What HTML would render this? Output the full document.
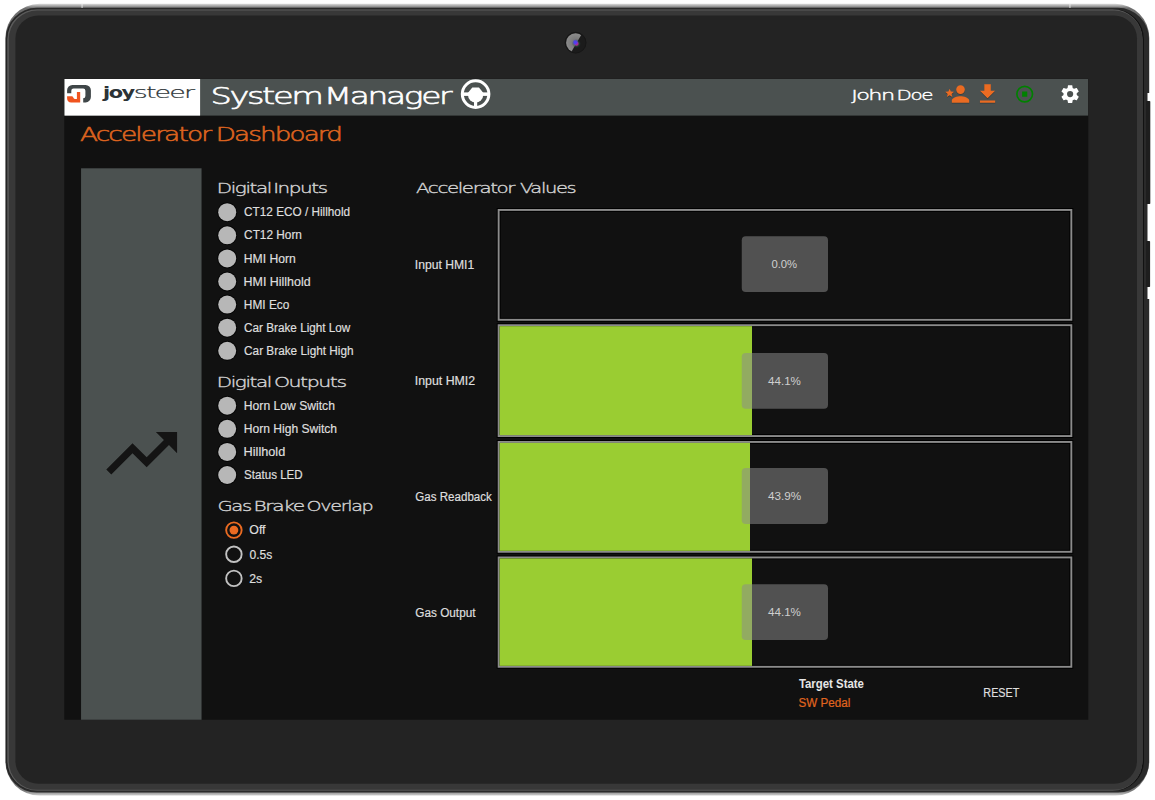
<!DOCTYPE html>
<html lang="en"><head><meta charset="utf-8"><title>Accelerator Dashboard</title>
<style>html,body{margin:0;padding:0;background:#fff;width:1155px;height:800px;overflow:hidden}svg{display:block;position:absolute;left:0;top:0}text{white-space:pre}</style>
</head><body>
<svg width="1155" height="800" viewBox="0 0 1155 800">
<defs>
<linearGradient id="hl" x1="0" y1="0" x2="0" y2="1"><stop offset="0" stop-color="#dcdcdc"/><stop offset="0.0055" stop-color="#6e6e6e"/><stop offset="0.5" stop-color="#666"/><stop offset="0.994" stop-color="#777"/><stop offset="1" stop-color="#d0d0d0"/></linearGradient>
<radialGradient id="lens" cx="0.5" cy="0.5" r="0.5"><stop offset="0" stop-color="#4a3cff"/><stop offset="0.4" stop-color="#4a3cff" stop-opacity="0.85"/><stop offset="1" stop-color="#4a3cff" stop-opacity="0"/></radialGradient>
<radialGradient id="lens2" cx="0.5" cy="0.5" r="0.5"><stop offset="0" stop-color="#d02a70"/><stop offset="0.35" stop-color="#c02a8a" stop-opacity="0.9"/><stop offset="0.6" stop-color="#2a6a4a" stop-opacity="0.45"/><stop offset="1" stop-color="#223" stop-opacity="0"/></radialGradient>
<radialGradient id="camg" cx="0.5" cy="0.5" r="0.5"><stop offset="0" stop-color="#6e6e6e"/><stop offset="0.45" stop-color="#7c7c7c"/><stop offset="1" stop-color="#8c8c8c"/></radialGradient>
<clipPath id="scr"><rect x="64.3" y="78.9" width="1024" height="640.8"/></clipPath>
<clipPath id="camL"><polygon points="560,28 585.3,28 565.4,62 560,62"/></clipPath>
</defs>
<g id="device">
<rect x="5.4" y="3.8" width="1143.9" height="791.8" rx="34" ry="34" fill="url(#hl)"/>
<rect x="5.7" y="7.8" width="1143.3" height="784.8" rx="31" ry="31" fill="#2a2a2a"/>
<rect x="1146" y="101" width="4.3" height="103" rx="0.8" fill="#1e1e1e"/>
<rect x="1146" y="241" width="4.1" height="46" rx="0.8" fill="#1e1e1e"/>
<rect x="1147.5" y="93" width="4" height="8" fill="#fff"/><rect x="1147.5" y="204" width="4" height="37" fill="#fff"/><rect x="1147.5" y="287" width="4" height="12" fill="#fff"/>
<rect x="6.8" y="9.2" width="1137.2" height="781.6" rx="30" ry="30" fill="#121212"/>
<rect x="7.2" y="9.2" width="1135.3" height="781.6" rx="30" ry="30" fill="#5a5a5a"/>
<rect x="8.8" y="10.6" width="1133.7" height="779.2" rx="28.5" ry="28.5" fill="#383838"/>
<rect x="15.4" y="15.6" width="1121.6" height="768.2" rx="23" ry="23" fill="#232323"/>
<rect x="81.6" y="3.8" width="0.9" height="4.2" fill="#eee"/><rect x="1069.5" y="3.8" width="0.9" height="4.2" fill="#eee"/>
</g>
<g id="camera">
<circle cx="575.6" cy="42.7" r="10.4" fill="#1b1b1b" stroke="#161616" stroke-width="1"/>
<circle cx="575.6" cy="42.7" r="9.5" fill="url(#camg)" clip-path="url(#camL)"/>
<circle cx="576.5" cy="43.7" r="4.6" fill="url(#lens2)"/>
<circle cx="575.4" cy="42.4" r="3.2" fill="url(#lens)"/>
</g>
<rect x="64.3" y="78.9" width="1024" height="640.8" fill="#111111"/>
<g clip-path="url(#scr)">
<rect x="64.3" y="78.9" width="1024" height="36.7" fill="#4b5150"/>
<rect x="64.3" y="78.9" width="135.8" height="36.7" fill="#fff"/>
<path d="M67.1 93.3V90.2a5.3 5.3 0 0 1 5.3-5.3H85.6a5.3 5.3 0 0 1 5.3 5.3V97.1a5.3 5.3 0 0 1-5.3 5.3H83.2V98.3a2.2 2.2 0 0 0 2.2-2.2V90.8a2.2 2.2 0 0 0-2.2-2.2H73.5a2.2 2.2 0 0 0-2.2 2.2V93.3Z" fill="#3f4648"/>
<path d="M76.9 92.1H80.2V102.4H71.2a4.2 4.2 0 0 1-4.1-4.2V96.3H72.2c0.9 0 1.2 2.6 2.6 2.6H76.9z" fill="#f0541f"/>
<text x="103.05" y="97.7" textLength="30.75" lengthAdjust="spacingAndGlyphs" font-family="'DejaVu Sans','Liberation Sans',sans-serif" font-size="15.8" fill="#2c3336" font-weight="bold" letter-spacing="-1.11">joy</text>
<text x="133.85" y="97.7" textLength="59.25" lengthAdjust="spacingAndGlyphs" font-family="'DejaVu Sans Light','DejaVu Sans','Liberation Sans',sans-serif" font-size="15.8" fill="#2c3336" font-weight="200" stroke="#2c3336" stroke-width="0.2" letter-spacing="-1.11">steer</text>
<text x="210.5" y="103.6" textLength="111.04" lengthAdjust="spacingAndGlyphs" font-family="'DejaVu Sans Light','DejaVu Sans','Liberation Sans',sans-serif" font-size="23.8" fill="#ffffff" font-weight="200" stroke="#ffffff" stroke-width="0.6" letter-spacing="-1.67">System</text>
<text x="323.85" y="103.6" textLength="126.39" lengthAdjust="spacingAndGlyphs" font-family="'DejaVu Sans Light','DejaVu Sans','Liberation Sans',sans-serif" font-size="23.8" fill="#ffffff" font-weight="200" stroke="#ffffff" stroke-width="0.6" letter-spacing="-1.67">Manager</text>
<g fill="#fff">
<circle cx="475.6" cy="94.1" r="13.3" fill="none" stroke="#fff" stroke-width="3"/>
<rect x="462" y="92.4" width="27.2" height="3.5"/>
<rect x="474.0" y="98" width="3.2" height="10"/>
<path d="M468.0 92.8L472.3 87.4H479.0L483.2 92.8V95.0A7.6 7.6 0 0 1 468.0 95.0z"/>
</g>
<text x="851.15" y="99.8" textLength="42.4" lengthAdjust="spacingAndGlyphs" font-family="'DejaVu Sans Light','DejaVu Sans','Liberation Sans',sans-serif" font-size="14.1" fill="#ffffff" font-weight="200" stroke="#ffffff" stroke-width="0.4" letter-spacing="-0.99">John</text>
<text x="896.6" y="99.8" textLength="35.39" lengthAdjust="spacingAndGlyphs" font-family="'DejaVu Sans Light','DejaVu Sans','Liberation Sans',sans-serif" font-size="14.1" fill="#ffffff" font-weight="200" stroke="#ffffff" stroke-width="0.4" letter-spacing="-0.99">Doe</text>
<g fill="#1f2b2b" fill-opacity="0.55">
<g transform="translate(944.2 81.80000000000001) scale(1.0875)"><path d="M15,14C12.33,14 7,15.33 7,18V20H23V18C23,15.33 17.67,14 15,14M15,12A4,4 0 0,0 19,8A4,4 0 0,0 15,4A4,4 0 0,0 11,8A4,4 0 0,0 15,12M5,13.28L7.45,14.77L6.8,11.96L9,10.08L6.11,9.83L5,7.19L3.87,9.83L1,10.08L3.18,11.96L2.5,14.77L5,13.28Z"/></g>
<g transform="translate(974.5 81.80000000000001) scale(1.0875)"><path d="M5,20H19V18H5M19,9H15V3H9V9H5L12,16L19,9Z"/></g>
</g>
<g fill="#ea6b22" fill-opacity="1">
<g transform="translate(944.2 80.9) scale(1.0875)"><path d="M15,14C12.33,14 7,15.33 7,18V20H23V18C23,15.33 17.67,14 15,14M15,12A4,4 0 0,0 19,8A4,4 0 0,0 15,4A4,4 0 0,0 11,8A4,4 0 0,0 15,12M5,13.28L7.45,14.77L6.8,11.96L9,10.08L6.11,9.83L5,7.19L3.87,9.83L1,10.08L3.18,11.96L2.5,14.77L5,13.28Z"/></g>
<g transform="translate(974.5 80.9) scale(1.0875)"><path d="M5,20H19V18H5M19,9H15V3H9V9H5L12,16L19,9Z"/></g>
</g>
<g transform="translate(1014.32 83.72) scale(0.865)" fill="#008000"><path d="M12,2A10,10 0 0,0 2,12A10,10 0 0,0 12,22A10,10 0 0,0 22,12A10,10 0 0,0 12,2M12,4C16.41,4 20,7.59 20,12C20,16.41 16.41,20 12,20C7.59,20 4,16.41 4,12C4,7.59 7.59,4 12,4M9,9V15H15V9"/></g>
<g transform="translate(1059.5 83.5) scale(0.885)" fill="#fff"><path d="M12,15.5A3.5,3.5 0 0,1 8.5,12A3.5,3.5 0 0,1 12,8.5A3.5,3.5 0 0,1 15.5,12A3.5,3.5 0 0,1 12,15.5M19.43,12.97C19.47,12.65 19.5,12.33 19.5,12C19.5,11.67 19.47,11.34 19.43,11L21.54,9.37C21.73,9.22 21.78,8.95 21.66,8.73L19.66,5.27C19.54,5.05 19.27,4.96 19.05,5.05L16.56,6.05C16.04,5.66 15.5,5.32 14.87,5.07L14.5,2.42C14.46,2.18 14.25,2 14,2H10C9.75,2 9.54,2.18 9.5,2.42L9.13,5.07C8.5,5.32 7.96,5.66 7.44,6.05L4.95,5.05C4.73,4.96 4.46,5.05 4.34,5.27L2.34,8.73C2.21,8.95 2.27,9.22 2.46,9.37L4.57,11C4.53,11.34 4.5,11.67 4.5,12C4.5,12.33 4.53,12.65 4.57,12.97L2.46,14.63C2.27,14.78 2.21,15.05 2.34,15.27L4.34,18.73C4.46,18.95 4.73,19.03 4.95,18.95L7.44,17.94C7.96,18.34 8.5,18.68 9.13,18.93L9.5,21.58C9.54,21.82 9.75,22 10,22H14C14.25,22 14.46,21.82 14.5,21.58L14.87,18.93C15.5,18.67 16.04,18.34 16.56,17.94L19.05,18.95C19.27,19.03 19.54,18.95 19.66,18.73L21.66,15.27C21.78,15.05 21.73,14.78 21.54,14.63L19.43,12.97Z"/></g>
<text x="79.95" y="140.5" textLength="130.23" lengthAdjust="spacingAndGlyphs" font-family="'DejaVu Sans Light','DejaVu Sans','Liberation Sans',sans-serif" font-size="19.4" fill="#dc631f" font-weight="200" stroke="#dc631f" stroke-width="0.55" letter-spacing="-1.36">Accelerator</text>
<text x="215.65" y="140.5" textLength="125.45" lengthAdjust="spacingAndGlyphs" font-family="'DejaVu Sans Light','DejaVu Sans','Liberation Sans',sans-serif" font-size="19.4" fill="#dc631f" font-weight="200" stroke="#dc631f" stroke-width="0.55" letter-spacing="-1.36">Dashboard</text>
<rect x="81.05" y="168.3" width="120.5" height="560" fill="#4b5150"/>
<g transform="translate(99.2 410.7) scale(3.54)" fill="#141414"><path d="M16,6L18.29,8.29L13.41,13.17L9.41,9.17L2,16.59L3.41,18L9.41,12L13.41,16L19.71,9.71L22,12V6H16Z"/></g>
<text x="216.75" y="193.0" textLength="54.21" lengthAdjust="spacingAndGlyphs" font-family="'DejaVu Sans Light','DejaVu Sans','Liberation Sans',sans-serif" font-size="14.2" fill="#d2d2d2" font-weight="200" stroke="#d2d2d2" stroke-width="0.35" letter-spacing="-0.99">Digital</text>
<text x="273.15" y="193.0" textLength="53.57" lengthAdjust="spacingAndGlyphs" font-family="'DejaVu Sans Light','DejaVu Sans','Liberation Sans',sans-serif" font-size="14.2" fill="#d2d2d2" font-weight="200" stroke="#d2d2d2" stroke-width="0.35" letter-spacing="-0.99">Inputs</text>
<text x="216.75" y="386.5" textLength="54.21" lengthAdjust="spacingAndGlyphs" font-family="'DejaVu Sans Light','DejaVu Sans','Liberation Sans',sans-serif" font-size="14.2" fill="#d2d2d2" font-weight="200" stroke="#d2d2d2" stroke-width="0.35" letter-spacing="-0.99">Digital</text>
<text x="273.9" y="386.5" textLength="71.76" lengthAdjust="spacingAndGlyphs" font-family="'DejaVu Sans Light','DejaVu Sans','Liberation Sans',sans-serif" font-size="14.2" fill="#d2d2d2" font-weight="200" stroke="#d2d2d2" stroke-width="0.35" letter-spacing="-0.99">Outputs</text>
<text x="217.5" y="510.5" textLength="33.34" lengthAdjust="spacingAndGlyphs" font-family="'DejaVu Sans Light','DejaVu Sans','Liberation Sans',sans-serif" font-size="14.2" fill="#d2d2d2" font-weight="200" stroke="#d2d2d2" stroke-width="0.35" letter-spacing="-0.99">Gas</text>
<text x="253.55" y="510.5" textLength="50.22" lengthAdjust="spacingAndGlyphs" font-family="'DejaVu Sans Light','DejaVu Sans','Liberation Sans',sans-serif" font-size="14.2" fill="#d2d2d2" font-weight="200" stroke="#d2d2d2" stroke-width="0.35" letter-spacing="-0.99">Brake</text>
<text x="306.55" y="510.5" textLength="65.77" lengthAdjust="spacingAndGlyphs" font-family="'DejaVu Sans Light','DejaVu Sans','Liberation Sans',sans-serif" font-size="14.2" fill="#d2d2d2" font-weight="200" stroke="#d2d2d2" stroke-width="0.35" letter-spacing="-0.99">Overlap</text>
<text x="416.05" y="192.7" textLength="98.02" lengthAdjust="spacingAndGlyphs" font-family="'DejaVu Sans Light','DejaVu Sans','Liberation Sans',sans-serif" font-size="14.2" fill="#d2d2d2" font-weight="200" stroke="#d2d2d2" stroke-width="0.35" letter-spacing="-0.99">Accelerator</text>
<text x="519.95" y="192.7" textLength="55.35" lengthAdjust="spacingAndGlyphs" font-family="'DejaVu Sans Light','DejaVu Sans','Liberation Sans',sans-serif" font-size="14.2" fill="#d2d2d2" font-weight="200" stroke="#d2d2d2" stroke-width="0.35" letter-spacing="-0.99">Values</text>
<circle cx="227.2" cy="212.20" r="10" fill="#000" fill-opacity="0.7"/><circle cx="227.2" cy="212.20" r="9" fill="#b7b7b7"/>
<text x="244.1" y="216.3" textLength="105.96" lengthAdjust="spacingAndGlyphs" font-family="'Liberation Sans','DejaVu Sans',sans-serif" font-size="12.0" fill="#dedede" stroke="#dedede" stroke-width="0.2">CT12 ECO / Hillhold</text>
<circle cx="227.2" cy="235.30" r="10" fill="#000" fill-opacity="0.7"/><circle cx="227.2" cy="235.30" r="9" fill="#b7b7b7"/>
<text x="244.1" y="239.4" textLength="57.83" lengthAdjust="spacingAndGlyphs" font-family="'Liberation Sans','DejaVu Sans',sans-serif" font-size="12.0" fill="#dedede" stroke="#dedede" stroke-width="0.2">CT12 Horn</text>
<circle cx="227.2" cy="258.40" r="10" fill="#000" fill-opacity="0.7"/><circle cx="227.2" cy="258.40" r="9" fill="#b7b7b7"/>
<text x="243.85" y="262.5" textLength="51.94" lengthAdjust="spacingAndGlyphs" font-family="'Liberation Sans','DejaVu Sans',sans-serif" font-size="12.0" fill="#dedede" stroke="#dedede" stroke-width="0.2">HMI Horn</text>
<circle cx="227.2" cy="281.50" r="10" fill="#000" fill-opacity="0.7"/><circle cx="227.2" cy="281.50" r="9" fill="#b7b7b7"/>
<text x="243.6" y="285.6" textLength="66.99" lengthAdjust="spacingAndGlyphs" font-family="'Liberation Sans','DejaVu Sans',sans-serif" font-size="12.0" fill="#dedede" stroke="#dedede" stroke-width="0.2">HMI Hillhold</text>
<circle cx="227.2" cy="304.60" r="10" fill="#000" fill-opacity="0.7"/><circle cx="227.2" cy="304.60" r="9" fill="#b7b7b7"/>
<text x="243.85" y="308.7" textLength="45.52" lengthAdjust="spacingAndGlyphs" font-family="'Liberation Sans','DejaVu Sans',sans-serif" font-size="12.0" fill="#dedede" stroke="#dedede" stroke-width="0.2">HMI Eco</text>
<circle cx="227.2" cy="327.70" r="10" fill="#000" fill-opacity="0.7"/><circle cx="227.2" cy="327.70" r="9" fill="#b7b7b7"/>
<text x="244.1" y="331.8" textLength="106.25" lengthAdjust="spacingAndGlyphs" font-family="'Liberation Sans','DejaVu Sans',sans-serif" font-size="12.0" fill="#dedede" stroke="#dedede" stroke-width="0.2">Car Brake Light Low</text>
<circle cx="227.2" cy="350.80" r="10" fill="#000" fill-opacity="0.7"/><circle cx="227.2" cy="350.80" r="9" fill="#b7b7b7"/>
<text x="244.1" y="354.9" textLength="109.46" lengthAdjust="spacingAndGlyphs" font-family="'Liberation Sans','DejaVu Sans',sans-serif" font-size="12.0" fill="#dedede" stroke="#dedede" stroke-width="0.2">Car Brake Light High</text>
<circle cx="227.2" cy="405.70" r="10" fill="#000" fill-opacity="0.7"/><circle cx="227.2" cy="405.70" r="9" fill="#b7b7b7"/>
<text x="243.85" y="409.8" textLength="91.07" lengthAdjust="spacingAndGlyphs" font-family="'Liberation Sans','DejaVu Sans',sans-serif" font-size="12.0" fill="#dedede" stroke="#dedede" stroke-width="0.2">Horn Low Switch</text>
<circle cx="227.2" cy="428.80" r="10" fill="#000" fill-opacity="0.7"/><circle cx="227.2" cy="428.80" r="9" fill="#b7b7b7"/>
<text x="243.85" y="432.9" textLength="93.22" lengthAdjust="spacingAndGlyphs" font-family="'Liberation Sans','DejaVu Sans',sans-serif" font-size="12.0" fill="#dedede" stroke="#dedede" stroke-width="0.2">Horn High Switch</text>
<circle cx="227.2" cy="451.90" r="10" fill="#000" fill-opacity="0.7"/><circle cx="227.2" cy="451.90" r="9" fill="#b7b7b7"/>
<text x="243.6" y="456.0" textLength="41.67" lengthAdjust="spacingAndGlyphs" font-family="'Liberation Sans','DejaVu Sans',sans-serif" font-size="12.0" fill="#dedede" stroke="#dedede" stroke-width="0.2">Hillhold</text>
<circle cx="227.2" cy="475.00" r="10" fill="#000" fill-opacity="0.7"/><circle cx="227.2" cy="475.00" r="9" fill="#b7b7b7"/>
<text x="244.1" y="479.1" textLength="58.57" lengthAdjust="spacingAndGlyphs" font-family="'Liberation Sans','DejaVu Sans',sans-serif" font-size="12.0" fill="#dedede" stroke="#dedede" stroke-width="0.2">Status LED</text>
<circle cx="233.9" cy="530.10" r="7.75" fill="none" stroke="#ea6b22" stroke-width="1.9"/>
<circle cx="233.9" cy="530.10" r="4.4" fill="#ea6b22"/>
<text x="249.3" y="534.4" textLength="16.25" lengthAdjust="spacingAndGlyphs" font-family="'Liberation Sans','DejaVu Sans',sans-serif" font-size="12.0" fill="#dedede" stroke="#dedede" stroke-width="0.2">Off</text>
<circle cx="233.9" cy="554.25" r="7.75" fill="none" stroke="#c2c2c2" stroke-width="1.9"/>
<text x="249.55" y="558.55" textLength="22.82" lengthAdjust="spacingAndGlyphs" font-family="'Liberation Sans','DejaVu Sans',sans-serif" font-size="12.0" fill="#dedede" stroke="#dedede" stroke-width="0.2">0.5s</text>
<circle cx="233.9" cy="578.40" r="7.75" fill="none" stroke="#c2c2c2" stroke-width="1.9"/>
<text x="249.3" y="582.7" textLength="12.96" lengthAdjust="spacingAndGlyphs" font-family="'Liberation Sans','DejaVu Sans',sans-serif" font-size="12.0" fill="#dedede" stroke="#dedede" stroke-width="0.2">2s</text>
<rect x="496.7" y="208" width="576.5999999999999" height="113.75" fill="#000"/>
<rect x="497.7" y="209" width="574.5999999999999" height="111.75" fill="#8b8b8b"/>
<rect x="499.59999999999997" y="210.9" width="570.8" height="107.95" fill="#000"/>
<rect x="500.59999999999997" y="211.9" width="568.8" height="105.95" fill="#111111"/>
<rect x="741.75" y="236.25" width="86.25" height="55.8" rx="4" ry="4" fill="#8c8c8c" fill-opacity="0.52"/>
<text x="771.4" y="268.25" textLength="25.77" lengthAdjust="spacingAndGlyphs" font-family="'Liberation Sans','DejaVu Sans',sans-serif" font-size="11.5" fill="#cfcfcf">0.0%</text>
<text x="414.8" y="269.0" textLength="59.38" lengthAdjust="spacingAndGlyphs" font-family="'Liberation Sans','DejaVu Sans',sans-serif" font-size="12.0" fill="#dedede" stroke="#dedede" stroke-width="0.2">Input HMI1</text>
<rect x="496.7" y="323.25" width="576.5999999999999" height="114.75" fill="#000"/>
<rect x="497.7" y="324.25" width="574.5999999999999" height="112.75" fill="#8b8b8b"/>
<rect x="499.59999999999997" y="326.15" width="570.8" height="108.95" fill="#000"/>
<rect x="500.59999999999997" y="327.15" width="568.8" height="106.95" fill="#111111"/>
<rect x="499.59999999999997" y="326.15" width="252.4" height="108.95" fill="#9acd32"/>
<rect x="741.75" y="353.00" width="86.25" height="55.8" rx="4" ry="4" fill="#8c8c8c" fill-opacity="0.52"/>
<text x="768.05" y="385.0" textLength="32.82" lengthAdjust="spacingAndGlyphs" font-family="'Liberation Sans','DejaVu Sans',sans-serif" font-size="11.5" fill="#cfcfcf">44.1%</text>
<text x="414.8" y="384.9" textLength="60.38" lengthAdjust="spacingAndGlyphs" font-family="'Liberation Sans','DejaVu Sans',sans-serif" font-size="12.0" fill="#dedede" stroke="#dedede" stroke-width="0.2">Input HMI2</text>
<rect x="496.7" y="440" width="576.5999999999999" height="113.75" fill="#000"/>
<rect x="497.7" y="441" width="574.5999999999999" height="111.75" fill="#8b8b8b"/>
<rect x="499.59999999999997" y="442.9" width="570.8" height="107.95" fill="#000"/>
<rect x="500.59999999999997" y="443.9" width="568.8" height="105.95" fill="#111111"/>
<rect x="499.59999999999997" y="442.9" width="250.4" height="107.95" fill="#9acd32"/>
<rect x="741.75" y="468.10" width="86.25" height="55.8" rx="4" ry="4" fill="#8c8c8c" fill-opacity="0.52"/>
<text x="767.95" y="500.1" textLength="33.11" lengthAdjust="spacingAndGlyphs" font-family="'Liberation Sans','DejaVu Sans',sans-serif" font-size="11.5" fill="#cfcfcf">43.9%</text>
<text x="415.3" y="500.9" textLength="76.55" lengthAdjust="spacingAndGlyphs" font-family="'Liberation Sans','DejaVu Sans',sans-serif" font-size="12.0" fill="#dedede" stroke="#dedede" stroke-width="0.2">Gas Readback</text>
<rect x="496.7" y="555.5" width="576.5999999999999" height="113.25" fill="#000"/>
<rect x="497.7" y="556.5" width="574.5999999999999" height="111.25" fill="#8b8b8b"/>
<rect x="499.59999999999997" y="558.4" width="570.8" height="107.45" fill="#000"/>
<rect x="500.59999999999997" y="559.4" width="568.8" height="105.45" fill="#111111"/>
<rect x="499.59999999999997" y="558.4" width="252.4" height="107.45" fill="#9acd32"/>
<rect x="741.75" y="584.25" width="86.25" height="55.8" rx="4" ry="4" fill="#8c8c8c" fill-opacity="0.52"/>
<text x="768.05" y="616.25" textLength="32.82" lengthAdjust="spacingAndGlyphs" font-family="'Liberation Sans','DejaVu Sans',sans-serif" font-size="11.5" fill="#cfcfcf">44.1%</text>
<text x="415.3" y="616.9" textLength="60.2" lengthAdjust="spacingAndGlyphs" font-family="'Liberation Sans','DejaVu Sans',sans-serif" font-size="12.0" fill="#dedede" stroke="#dedede" stroke-width="0.2">Gas Output</text>
<text x="798.9" y="688.0" textLength="65.05" lengthAdjust="spacingAndGlyphs" font-family="'Liberation Sans','DejaVu Sans',sans-serif" font-size="12.0" fill="#e6e6e6" font-weight="bold">Target State</text>
<text x="798.4" y="706.5" textLength="51.83" lengthAdjust="spacingAndGlyphs" font-family="'Liberation Sans','DejaVu Sans',sans-serif" font-size="12.0" fill="#e0651f" stroke="#e0651f" stroke-width="0.2">SW Pedal</text>
<text x="983.35" y="697.1" textLength="36.08" lengthAdjust="spacingAndGlyphs" font-family="'Liberation Sans','DejaVu Sans',sans-serif" font-size="12.0" fill="#dedede" stroke="#dedede" stroke-width="0.2">RESET</text>
</g>
</svg>
</body></html>
